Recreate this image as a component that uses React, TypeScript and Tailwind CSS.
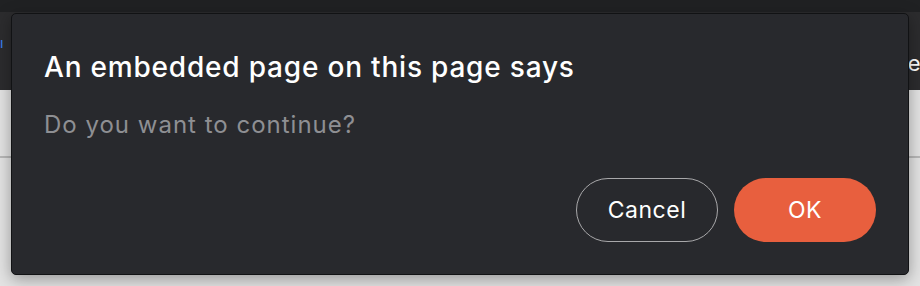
import React from 'react';

export default function App() {
    return (
        <div className="relative w-[920px] h-[286px] overflow-hidden bg-[#e3e3e3] font-['Inter',sans-serif]">

            {/* Background page */}
            <div className="h-[12px] bg-[#202123]" />
            <div className="h-[78px] bg-[#2c2c2e] flex justify-between items-start pt-[24px]">
                <span className="text-[#3b82f6] text-[14px] leading-none">ı</span>
                <span className="text-white text-[22px] leading-none mr-[-6px] mt-[16px]">el</span>
            </div>
            <div className="h-[66px]" />
            <div className="h-[2px] bg-[#b8b8b8]" />

            {/* Dialog */}
            <div className="absolute left-[11px] top-[13px] w-[898px] h-[262px] rounded-[5px] border border-[#111214] bg-[#28292d] shadow-[0_4px_16px_rgba(0,0,0,0.35)] flex flex-col pl-[32px] pr-[32px] pt-[36px]">
                <h1 className="text-white text-[28px] leading-[34px] font-medium tracking-[0.8px]">
                    An embedded page on this page says
                </h1>
                <p className="mt-[27px] text-[#8e8f93] text-[24px] leading-[28px] tracking-[1px]">
                    Do you want to continue?
                </p>
                <div className="mt-auto mb-[32px] flex justify-end gap-[16px]">
                    <button className="w-[142px] h-[64px] rounded-full border border-[#a8a8aa] text-white text-[23px] tracking-[0.5px]">
                        Cancel
                    </button>
                    <button className="w-[142px] h-[64px] rounded-full bg-[#e85f3e] text-white text-[23px] tracking-[0.5px]">
                        OK
                    </button>
                </div>
            </div>
        </div>
    );
}
